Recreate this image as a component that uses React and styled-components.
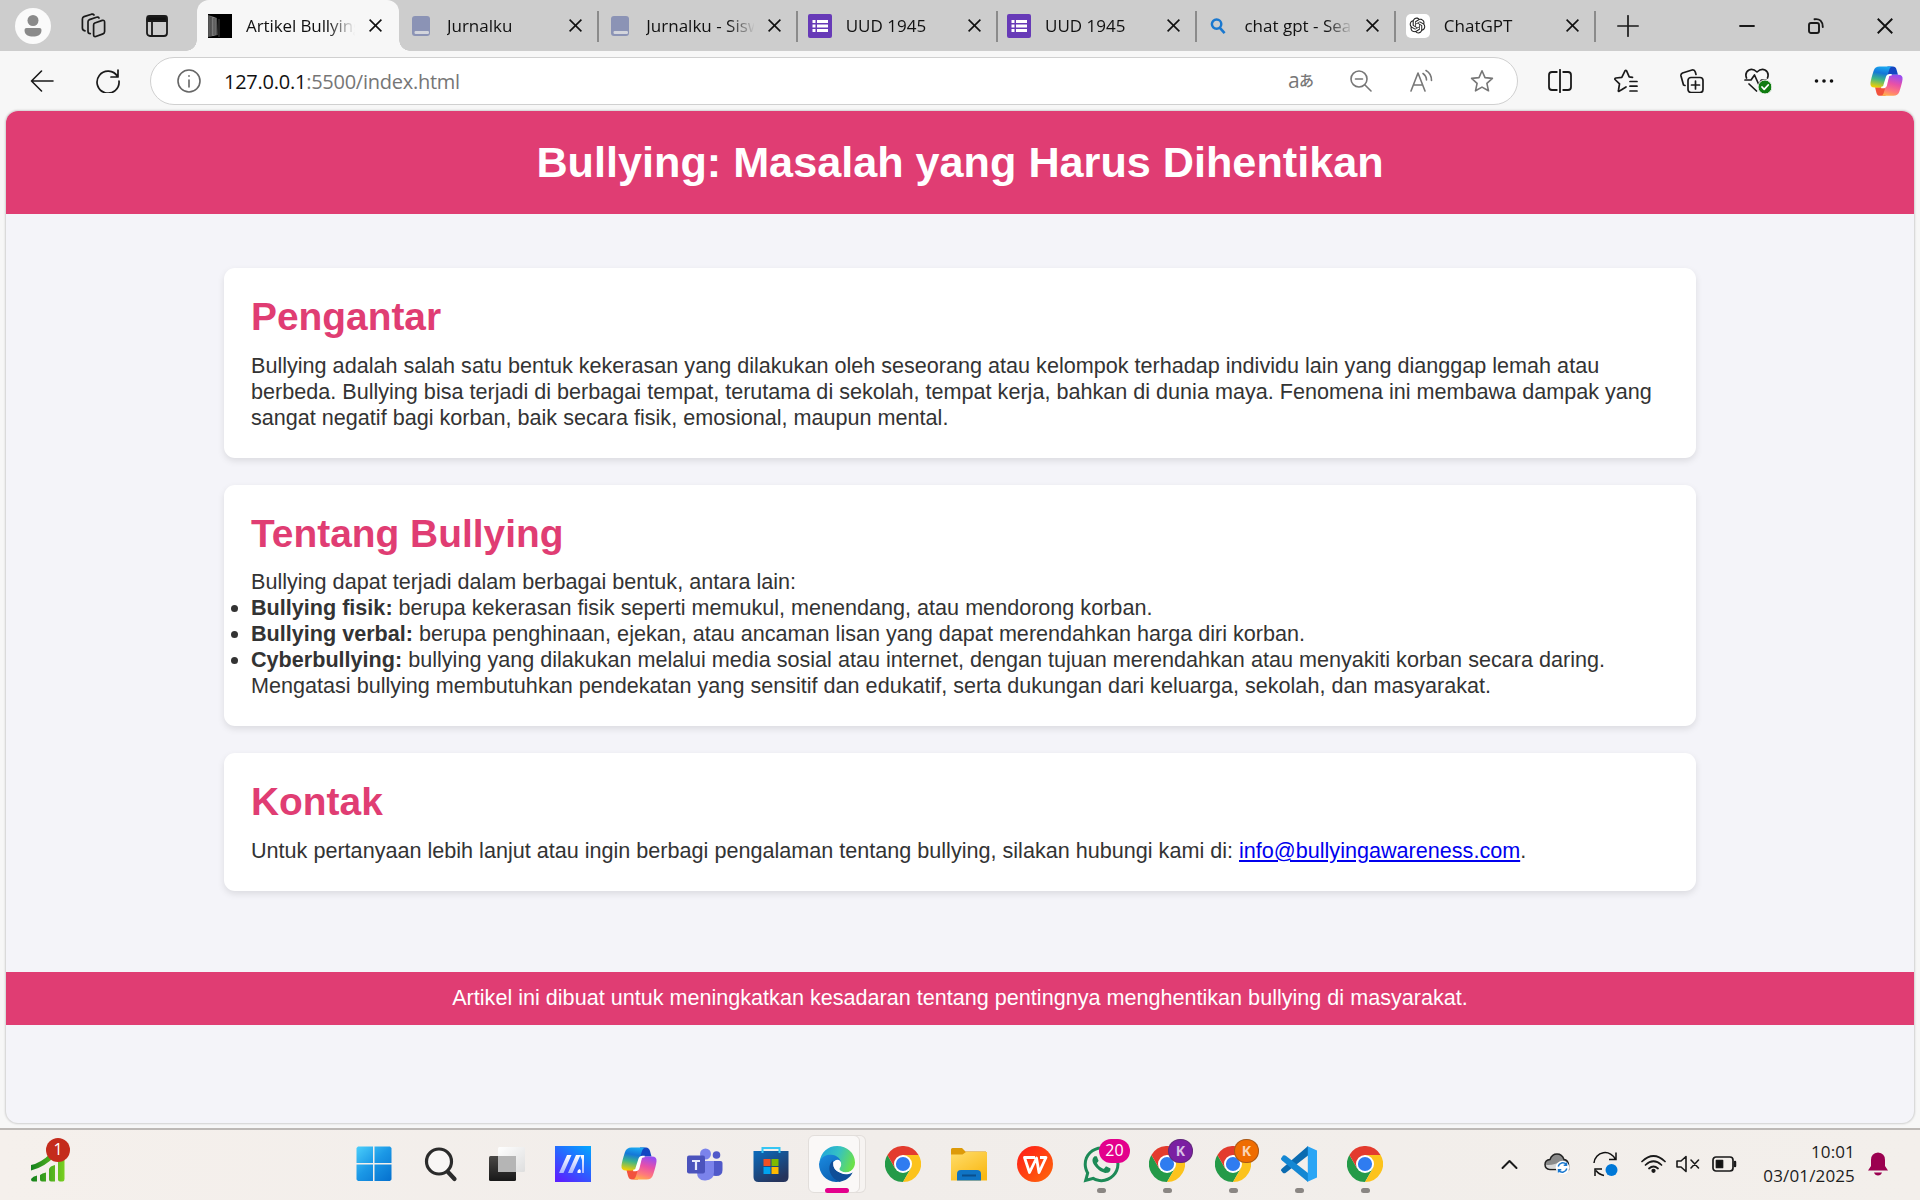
import React from "react";
import styled, { createGlobalStyle, css } from "styled-components";
import { RiOpenaiFill } from "react-icons/ri";
import { FaWhatsapp } from "react-icons/fa";

const GlobalStyle = createGlobalStyle`
  *, *::before, *::after { box-sizing: border-box; }
  html, body { margin: 0; padding: 0; overflow: hidden; }
`;

const uiFont = `"Open Sans", "Noto Sans", sans-serif`;
const pageFont = `"Liberation Sans", Arial, sans-serif`;
const pink = "#e03d73";

const Screen = styled.div`
  display: flex;
  flex-direction: column;
  width: 1920px;
  height: 1200px;
  overflow: hidden;
  background: #f7f7f7;
  font-family: ${uiFont};
  color: #111;
`;

/* ---------- tab strip ---------- */

const TabStrip = styled.div`
  display: flex;
  flex: none;
  height: 51px;
  background: #cdcdcd;
`;

const Cell = styled.div`
  display: flex;
  flex: none;
  align-items: center;
  justify-content: center;
  width: ${(p) => p.$w}px;
  height: 100%;
`;

const StripTools = styled.div`
  display: flex;
  width: 199px;
  padding-left: 2px;
`;

const Avatar = styled.div`
  display: flex;
  align-items: center;
  justify-content: center;
  width: 36px;
  height: 36px;
  border-radius: 50%;
  background: #fafafa;
`;

const TabBox = styled.div`
  position: relative;
  display: flex;
  flex: none;
  align-items: center;
  width: 199.4px;
  height: 51px;
  padding: 0 0 0 10.5px;
  ${(p) =>
    p.$active &&
    css`
      width: 202px;
      margin: 0 -0.6px 0 -2px;
      padding-left: 11px;
      background: #f7f7f7;
      border-radius: 12px 12px 0 0;
      &::before, &::after {
        content: "";
        position: absolute;
        bottom: 0;
        width: 11px;
        height: 11px;
      }
      &::before {
        left: -11px;
        background: radial-gradient(circle at 0 0, #cdcdcd 10.5px, #f7f7f7 11px);
      }
      &::after {
        right: -11px;
        background: radial-gradient(circle at 100% 0, #cdcdcd 10.5px, #f7f7f7 11px);
      }
    `}
  ${(p) =>
    p.$line &&
    css`
      &::after {
        content: "";
        position: absolute;
        right: -1px;
        top: 11px;
        width: 2px;
        height: 31px;
        background: #8b8b8b;
      }
    `}
`;

const Favicon = styled.div`
  display: flex;
  align-items: center;
  justify-content: center;
  width: 24px;
  height: 24px;
  margin-right: 14px;
`;

const TabLabel = styled.div`
  width: ${(p) => p.$w}px;
  height: 28px;
  overflow: hidden;
  white-space: nowrap;
  font-size: 17px;
  line-height: 28px;
  letter-spacing: ${(p) => p.$ls || 0}px;
  -webkit-mask-image: linear-gradient(90deg, #000 82px, transparent 109px);
  mask-image: linear-gradient(90deg, #000 82px, transparent 109px);
`;

const CloseCell = styled.div`
  display: flex;
  align-items: center;
  justify-content: center;
  width: 42px;
`;

const Spacer = styled.div`
  flex: 1;
`;

const Cross = ({ s = 13, w = 1.6 }) => (
  <svg width={s} height={s} viewBox="0 0 13 13" fill="none" stroke="#111" strokeWidth={w}>
    <path d="M.6.6 12.4 12.4M12.4.6.6 12.4" />
  </svg>
);

const DoorIcon = () => (
  <svg width="24" height="24">
    <defs>
      <linearGradient id="door" x1="0" x2="1" y1="0" y2="0">
        <stop offset="0" stopColor="#4a4a4a" />
        <stop offset=".6" stopColor="#8a8a8a" />
        <stop offset="1" stopColor="#333" />
      </linearGradient>
    </defs>
    <rect width="24" height="24" fill="#000" />
    <path d="M0 1 9 4 10 21 0 23z" fill="url(#door)" />
    <path d="M6 4v17M3 3v19" stroke="#333" strokeWidth=".8" />
    <path d="M11 5v18" stroke="#444" strokeWidth="1" />
  </svg>
);

const BookIcon = () => (
  <svg width="18" height="20" viewBox="0 0 18 20">
    <rect width="18" height="20" rx="3" fill="#8b93b5" />
    <rect x="2.500" y="15" width="14.500" height="3" rx="1.200" fill="#d3d5dc" />
  </svg>
);

const FormIcon = () => (
  <svg width="24" height="24">
    <rect width="24" height="24" rx="2" fill="#673ab7" />
    <g fill="#fff">
      <path d="M4.500 6h3v3h-3zM9 6h11v3H9zM4.500 10.500h3v3h-3zM9 10.500h11v3H9zM4.500 15h3v3h-3zM9 15h11v3H9z" />
    </g>
  </svg>
);

const SearchBlue = () => (
  <svg width="16" height="16" viewBox="0 0 17 17" fill="none" stroke="#1a78cf" strokeWidth="2.600">
    <circle cx="7" cy="6.500" r="5" />
    <path d="m10.500 10.500 5 5.500" strokeWidth="2.800" />
  </svg>
);

const GptBox = styled.div`
  display: flex;
  align-items: center;
  justify-content: center;
  width: 24px;
  height: 24px;
  border-radius: 5px;
  background: #fff;
  svg { width: 19px; height: 19px; color: #222; }
`;

const GptIcon = () => (
  <GptBox>
    <RiOpenaiFill />
  </GptBox>
);

const tabs = [
  { title: "Artikel Bullying", icon: <DoorIcon />, active: true, ls: -0.1 },
  { title: "Jurnalku", icon: <BookIcon />, line: true, ls: 0 },
  { title: "Jurnalku - Siswa", icon: <BookIcon />, line: true, ls: 0 },
  { title: "UUD 1945", icon: <FormIcon />, line: true, ls: 0 },
  { title: "UUD 1945", icon: <FormIcon />, line: true, ls: 0 },
  { title: "chat gpt - Search", icon: <SearchBlue />, line: true, ls: 0 },
  { title: "ChatGPT", icon: <GptIcon />, line: true, ls: 0 },
];

/* ---------- toolbar ---------- */

const Toolbar = styled.div`
  display: flex;
  flex: none;
  align-items: center;
  height: 60px;
  padding-left: 9px;
`;

const AddressBar = styled.div`
  display: flex;
  align-items: center;
  width: 1368px;
  height: 48px;
  margin: 0 8.500px 0 9px;
  padding: 0 4px 0 26px;
  border: 1.5px solid #d0d0d0;
  border-radius: 24px;
  background: #fff;
`;

const Url = styled.div`
  margin-left: 23px;
  font-size: 20px;
  line-height: 30px;
  padding-top: 1px;
  letter-spacing: ${(p) => p.$ls}px;
  white-space: nowrap;
  color: #767676;
  b { font-weight: 400; color: #111; }
`;

const Translate = styled.span`
  display: flex;
  align-items: center;
  font: 21px/24px ${uiFont};
  color: #777;
  padding-bottom: 3px;
  small { font: 500 15px/20px "Noto Sans CJK JP", sans-serif; margin-left: -0.5px; }
`;

const Ico = ({ w = 24, h = 24, sw = 1.6, c = "#1a1a1a", children }) => (
  <svg width={w} height={h} viewBox={`0 0 ${w} ${h}`} fill="none" stroke={c} strokeWidth={sw} strokeLinecap="round" strokeLinejoin="round">
    {children}
  </svg>
);

const Copilot = ({ size = 36, id }) => (
  <svg width={size} height={size * 0.92} viewBox="0 0 36 33">
    <defs>
      <linearGradient id={id + "a"} x1="0.5" y1="0" x2="0.3" y2="1">
        <stop offset="0" stopColor="#1aa7f0" />
        <stop offset=".3" stopColor="#1477d8" />
        <stop offset=".6" stopColor="#3db58a" />
        <stop offset="1" stopColor="#f5d000" />
      </linearGradient>
      <linearGradient id={id + "b"} x1=".6" y1="0" x2=".3" y2="1">
        <stop offset="0" stopColor="#9b4df0" />
        <stop offset=".4" stopColor="#e850a8" />
        <stop offset=".75" stopColor="#ff7a7a" />
        <stop offset="1" stopColor="#ffb04a" />
      </linearGradient>
    </defs>
    <path d="M19 0.5h6q3 0 4 3.5l1.5 5.5h-6q-4 0-5.5 4z" fill="#1346c2" />
    <path d="M17 32.5h-6q-3 0-4-3.5L5.500 23h6q4 0 5.500-4z" fill="#f2523d" />
    <path d="M10.500 0.500H25q-3 0-4 3.500l-5 16q-1 3.500-5 3.500H5q-5 0-4.500-5Q1 14 4 5 5.500.5 10.500.500z" fill={`url(#${id}a)`} />
    <path d="M25.500 32.500H11q3 0 4-3.500l5-16q1-3.500 5-3.500h6q5 0 4.500 5Q35 19 32 28q-1.500 4.500-6.500 4.500z" fill={`url(#${id}b)`} />
    <path d="M20.200 10.500q1-1 3.500-1h-2.200q-2.500 0-3.300 2.500l-3 9.500q-.8 2-3 2h2.200q2.500 0 3.300-2.500z" fill="#fff" stroke="#fff" strokeWidth="1.600" />
  </svg>
);

const starPath = "M12 1.800 15 8.600 22.400 9.400 16.900 14.400 18.500 21.800 12 18.100 5.500 21.800 7.100 14.400 1.600 9.400 9 8.600z";

/* ---------- web page ---------- */

const Page = styled.main`
  display: flex;
  flex-direction: column;
  flex: none;
  height: 1012px;
  margin: 0 6px;
  overflow: hidden;
  border-radius: 12px;
  background: #f4f4f9;
  box-shadow: 0 0 2px 1px rgba(0, 0, 0, 0.16);
  font: 21.6px/26px ${pageFont};
  color: #333;
`;

const Hero = styled.header`
  padding: 27px;
  background: ${pink};
  color: #fff;
  text-align: center;
  h1 { margin: 0; font-size: 43.2px; line-height: 49px; }
`;

const Content = styled.div`
  display: flex;
  flex-direction: column;
  gap: 27px;
  width: 1472px;
  margin: 54px auto 81px;
`;

const Card = styled.section`
  padding: 27px;
  border-radius: 11px;
  background: #fff;
  box-shadow: 0 3px 7px rgba(0, 0, 0, 0.1);
  height: ${(p) => p.$h}px;
  h2 { margin: 0 0 ${(p) => p.$gap || 14}px; font-size: 38.88px; line-height: 44px; color: ${pink}; }
  p, ul { margin: 0; padding: 0; }
  a { color: #0000ee; }
`;

const Footer = styled.footer`
  padding: 13px 0 14px;
  background: ${pink};
  color: #fff;
  text-align: center;
`;

/* ---------- taskbar ---------- */

const Taskbar = styled.div`
  display: flex;
  flex: none;
  align-items: center;
  height: 72px;
  margin-top: 5px;
  padding-bottom: 2px;
  border-top: 2px solid #bdb9b6;
  background: linear-gradient(90deg, #f5f0ec, #f1edea 45%, #f3efeb);
`;

const Widget = styled.div`
  position: relative;
  flex: none;
  width: 342px;
  height: 68px;
  padding: 17px 0 0 31px;
`;

const WidgetBadge = styled.div`
  position: absolute;
  left: 46px;
  top: 8px;
  width: 24px;
  height: 24px;
  border-radius: 50%;
  background: #c42b1c;
  color: #fff;
  text-align: center;
  font-size: 16px;
  line-height: 23px;
`;

const AppSlot = styled.div`
  position: relative;
  display: flex;
  flex: none;
  align-items: center;
  justify-content: center;
  width: 66px;
  height: 68px;
  padding-right: ${(p) => p.$nudge || 0}px;
  ${(p) =>
    p.$run &&
    css`
      &::after {
        content: "";
        position: absolute;
        left: calc(50% - 4.5px);
        top: 58px;
        width: 9px;
        height: 5px;
        border-radius: 3px;
        background: #8a8683;
      }
    `}
  ${(p) =>
    p.$current &&
    css`
      &::after {
        left: calc(50% - 12px);
        width: 24px;
        background: #e3008c;
      }
    `}
`;

const Highlight = styled.div`
  display: flex;
  align-items: center;
  justify-content: center;
  width: 52px;
  height: 58px;
  margin-right: 6px;
  padding-left: 6px;
  border-radius: 6px;
  background: #faf8f7;
  border: 1px solid #e2dedb;
  box-shadow: 6px 0 0 -1px #f6f3f1, 6px 0 0 0 #e2dedb;
`;

const Badge = styled.div`
  position: absolute;
  left: ${(p) => p.$x}px;
  top: 9px;
  width: ${(p) => p.$w}px;
  height: 24px;
  border-radius: 12px;
  background: ${(p) => p.$c};
  color: ${(p) => p.$fg || "#fff"};
  text-align: center;
  font-size: ${(p) => p.$fs || 16}px;
  font-weight: ${(p) => (p.$fs ? 700 : 400)};
  line-height: 23px;
  ${(p) => p.$fs && "box-shadow: inset 0 0 0 1px rgba(60,60,60,.4);"}
`;

const Chrome = () => (
  <svg width="36" height="36" viewBox="0 0 36 36">
    <path d="M2.400 9A18 18 0 0 0 18 36L25.800 22.500 18 18 10.200 22.500z" fill="#249a48" />
    <path d="M33.600 9A18 18 0 0 1 18 36L25.800 22.500 18 9z" fill="#fcc31c" />
    <path d="M2.400 9A18 18 0 0 1 33.600 9H18L10.200 22.500z" fill="#e33b2e" />
    <circle cx="18" cy="18" r="9" fill="#fff" />
    <circle cx="18" cy="18" r="7.100" fill="#2f7cf0" />
  </svg>
);

const WindowsLogo = () => (
  <svg width="36" height="36" viewBox="0 0 36 36">
    <defs>
      <linearGradient id="win" gradientUnits="userSpaceOnUse" x1="0" y1="0" x2="32" y2="36">
        <stop offset="0" stopColor="#4cd0fb" />
        <stop offset=".5" stopColor="#1b98e6" />
        <stop offset="1" stopColor="#0672cf" />
      </linearGradient>
    </defs>
    <path d="M2 .5h15v16.500H.5V2zM18.500.5H34L35.500 2v15h-17zM.5 18.500H17V35H2L.5 33.500zM18.500 18.500h17v15L34 35H18.500z" fill="url(#win)" />
  </svg>
);

const SearchDark = () => (
  <svg width="34" height="36" viewBox="0 0 34 36" fill="none" stroke="#2b2b2b" strokeLinecap="round">
    <circle cx="15" cy="15.500" r="12.500" strokeWidth="3.200" fill="#f8f6f5" />
    <path d="m24 26 6.500 7" strokeWidth="4.200" />
  </svg>
);

const TaskView = () => (
  <svg width="36" height="36" viewBox="0 0 36 36">
    <defs>
      <linearGradient id="tv" x1="0" x2="0" y1="0" y2="1">
        <stop offset="0" stopColor="#4a4846" />
        <stop offset="1" stopColor="#181818" />
      </linearGradient>
      <linearGradient id="tw" x1="0" x2="1" y1="0" y2="1">
        <stop offset="0" stopColor="#fff" />
        <stop offset="1" stopColor="#dedede" />
      </linearGradient>
    </defs>
    <rect x="0" y="10" width="27" height="25" rx="1.500" fill="url(#tv)" />
    <rect x="9" y="1" width="27" height="25" rx="1.500" fill="url(#tw)" />
    <rect x="9" y="10" width="18" height="16" fill="#b5b5b5" />
  </svg>
);

const Armoury = () => (
  <svg width="36" height="36" viewBox="0 0 36 36">
    <defs>
      <linearGradient id="arm" x1=".2" y1="1" x2=".9" y2="0">
        <stop offset="0" stopColor="#5a22ff" />
        <stop offset=".5" stopColor="#2a63ff" />
        <stop offset="1" stopColor="#05a3ff" />
      </linearGradient>
      <linearGradient id="armw" x1="0" y1="1" x2="0" y2="0">
        <stop offset="0" stopColor="#a9b6ff" />
        <stop offset="1" stopColor="#fff" />
      </linearGradient>
    </defs>
    <rect width="36" height="36" fill="url(#arm)" />
    <path d="M4 27 12 9h4.500L8.500 27zM13 27 21 9h4.500L17.500 27z" fill="url(#armw)" />
    <path d="M25 9h4v18h-2V14z" fill="url(#armw)" />
    <path d="M24.500 23q2 1 1 4h-3q-.5-3 2-4z" fill="#fff" />
  </svg>
);

const Teams = () => (
  <svg width="36" height="33" viewBox="0 0 36 33">
    <circle cx="18.500" cy="6" r="5.500" fill="#7b83eb" />
    <circle cx="29.500" cy="7" r="3.800" fill="#5059c9" />
    <path d="M26 13h7.500q2 0 2 2v7q0 6-6.500 6-3 0-4-1z" fill="#5059c9" />
    <path d="M10 13h17v11q0 8-8.500 8.500T10 24z" fill="#7b83eb" />
    <rect y="7.500" width="18" height="18" rx="2" fill="#4b53bc" />
    <path d="M5 12h8v2h-2.900v8H7.900v-8H5z" fill="#e8e9fb" />
  </svg>
);

const Store = () => (
  <svg width="36" height="36" viewBox="0 0 36 36">
    <defs>
      <linearGradient id="st" x1="0" x2=".6" y1="0" y2="1">
        <stop offset="0" stopColor="#0a6bbd" />
        <stop offset="1" stopColor="#26345c" />
      </linearGradient>
    </defs>
    <path d="M.5 5h35v26q0 5-5 5h-25q-5 0-5-5z" fill="url(#st)" />
    <path d="M9.500 7V2H26.500V7" fill="none" stroke="#35c5f3" strokeWidth="2" />
    <path d="M10.500 13h7v7h-7z" fill="#f25022" />
    <path d="M18.500 13h7v7h-7z" fill="#7fba00" />
    <path d="M10.500 21h7v7h-7z" fill="#00a4ef" />
    <path d="M18.500 21h7v7h-7z" fill="#ffb900" />
  </svg>
);

const Edge = () => (
  <svg width="36" height="36" viewBox="0 0 36 36">
    <defs>
      <linearGradient id="e1" x1="0" x2="1" y1=".2" y2=".5">
        <stop offset="0" stopColor="#1ea3dc" />
        <stop offset=".5" stopColor="#35c1c4" />
        <stop offset="1" stopColor="#6be14a" />
      </linearGradient>
      <linearGradient id="e2" x1="0" x2=".5" y1="0" y2="1">
        <stop offset="0" stopColor="#1b8be0" />
        <stop offset="1" stopColor="#0c62b5" />
      </linearGradient>
    </defs>
    <path d="M.5 16C2 6 9 0 18 0 28 0 36 7 36 16.500c0 6-4.500 10-9.500 10-4.500 0-7-1.800-6.500-3.300C22 21 22.500 19 22 17 20 12 6 8 .5 16z" fill="url(#e1)" />
    <path d="M0 18C1 11 7 8.500 12 8.800c6 .4 10 4 10 8.700 0-2.500-3-3.500-5-3-4 1-5 5-4.500 9 .7 6 5 10.500 9.500 11.800-2 .7-4 .7-5 .7C6.500 35.500 0 27 0 18z" fill="url(#e2)" />
    <path d="M14 14.500C8 19 9 31 20.500 35.700 27 35 31.500 31 33.300 27q.4-1.200-1-.6C24 30 14 25 14.200 18z" fill="#0f4e98" />
    <path d="M14.500 18.500c0-3 2-4.700 4-4.700s3.500 1.500 3.500 4c0 2-1.800 3.400-1.800 5 0 1.700 3 3.500 6.800 3.500-6 1.700-12.500-1.800-12.500-7.800z" fill="#fdfdfd" />
    <path d="M20.300 22.800c0 1.900 2.700 3.700 6.200 3.700 3 0 5.500-1 7.500-3l-1 3.300c-6 3-12 1-13.500-2z" fill="#fdfdfd" />
  </svg>
);

const Explorer = () => (
  <svg width="36" height="33" viewBox="0 0 36 33">
    <defs>
      <linearGradient id="ex" x1="0" x2=".7" y1="0" y2="1">
        <stop offset="0" stopColor="#ffdd6b" />
        <stop offset="1" stopColor="#f9b916" />
      </linearGradient>
    </defs>
    <path d="M0 1.500Q0 0 1.500 0H11l3.500 3.500H35V12H0z" fill="#dd9a08" />
    <path d="M0 6.500H11.500L15 4H36V32.500H0z" fill="url(#ex)" />
    <path d="M6 32.500V26q0-4 4-4H26q4 0 4 4v6.500z" fill="#0f74c4" />
    <path d="M11 27.500H25" stroke="#0a4f8c" strokeWidth="2" />
  </svg>
);

const Wps = () => (
  <svg width="36" height="36" viewBox="0 0 36 36">
    <defs>
      <linearGradient id="wp" x1="0" x2="1" y1="0" y2="1">
        <stop offset="0" stopColor="#ff1a1a" />
        <stop offset="1" stopColor="#ff6a0a" />
      </linearGradient>
    </defs>
    <circle cx="18" cy="18" r="18" fill="url(#wp)" />
    <path d="M18 11.500H7.500L12.500 26.500 19.500 12 22 26.500 29 11.500H23" fill="none" stroke="#fff" strokeWidth="2.800" strokeLinejoin="round" />
  </svg>
);

const VsCode = () => (
  <svg width="36" height="36" viewBox="0 0 36 36">
    <path d="M0 24.500 2 27q1.500.8 2.800-.2L27 9.500V0L1 22.500q-1.200 1-1 2z" fill="#0b6bb0" />
    <path d="M0 12.500 2 9.500q1.500-.8 2.800.2L27 27v9L1 14.500q-1.200-1-1-2z" fill="#1487d3" />
    <path d="M26 36 36 31.500V4.500L26 0q.8.6.8 2v32q0 1.300-.8 2z" fill="#2aa5f5" />
  </svg>
);

const WaWrap = styled.div`
  display: flex;
  svg { width: 41px; height: 41px; color: #1d8a57; }
`;

const apps = [
  { icon: <WindowsLogo />, nudge: 3 },
  { icon: <SearchDark /> },
  { icon: <TaskView /> },
  { icon: <Armoury /> },
  { icon: <Copilot id="tb" /> },
  { icon: <Teams /> },
  { icon: <Store /> },
  { icon: <Highlight><Edge /></Highlight>, run: true, current: true },
  { icon: <Chrome /> },
  { icon: <Explorer /> },
  { icon: <Wps /> },
  { icon: <WaWrap><FaWhatsapp /></WaWrap>, run: true, badge: { $x: 31, $w: 31, $c: "#e3008c", text: "20" } },
  { icon: <Chrome />, run: true, badge: { $x: 34, $w: 25, $c: "#7b1fa2", $fs: 14, $fg: "#d9bfe6", text: "K" } },
  { icon: <Chrome />, run: true, badge: { $x: 34, $w: 25, $c: "#ef6c00", $fs: 14, $fg: "#fbd5b5", text: "K" } },
  { icon: <VsCode />, run: true },
  { icon: <Chrome />, run: true },
];

const Clock = styled.div`
  width: 107px;
  flex: none;
  text-align: right;
  font-size: 17px;
  line-height: 24px;
  letter-spacing: 0.15px;
  color: #1c1c1c;
  white-space: nowrap;
`;

const BellCell = styled.div`
  display: flex;
  flex: none;
  align-items: center;
  width: 65px;
  padding-left: 13px;
`;

export default function App() {
  return (
    <Screen>
      <GlobalStyle />
      <TabStrip>
        <StripTools>
          <Cell $w={62}>
            <Avatar>
              <svg width="18" height="22" viewBox="0 0 18 22" fill="#8a8a8a">
                <circle cx="9" cy="5.500" r="5.500" />
                <path d="M2.500 13h13q2 0 2 2c0 5-4 6.500-8.500 6.500S.5 20 .5 15q0-2 2-2z" />
              </svg>
            </Avatar>
          </Cell>
          <Cell $w={58}>
            <Ico w={25} h={25} sw={1.700}>
              <path d="M13.800 10 21.300 7.400Q23.600 6.800 23.600 9.200V18.500Q23.600 20.300 22 20.900L14.800 23.500Q12.600 24 12.600 21.700V12Q12.600 10.500 13.800 10z" />
              <path d="M9.300 20.600Q7 20.500 7 18.500V8.800Q7 7.200 8.500 6.600L15.500 4.200Q17.500 3.700 18 5" />
              <path d="M4 17.800Q1.400 17.500 1.400 15V6Q1.400 4.200 3 3.600L10.500 1.200Q12.300.8 13 2" />
            </Ico>
          </Cell>
          <Cell $w={69}>
            <Ico w={22} h={22} sw={1.800}>
              <rect x="1" y="1" width="20" height="20" rx="3" />
              <path d="M1.500 1.500h19V6h-19z" fill="#111" />
              <path d="M6 7v14" />
            </Ico>
          </Cell>
        </StripTools>
        {tabs.map((t, i) => (
          <TabBox key={i} $active={t.active} $line={t.line}>
            <Favicon>{t.icon}</Favicon>
            <TabLabel $ls={t.ls} $w={t.active ? 108.5 : 107.5}>{t.title}</TabLabel>
            <CloseCell>
              <Cross />
            </CloseCell>
          </TabBox>
        ))}
        <Cell $w={66}>
          <Ico w={22} h={22} sw={1.700}><path d="M11 .8v20.400M.8 11h20.400" /></Ico>
        </Cell>
        <Spacer />
        <Cell $w={69}>
          <Ico w={16} h={16} sw={1.800}><path d="M1 8h14" /></Ico>
        </Cell>
        <Cell $w={69}>
          <Ico w={16} h={16} sw={1.900}>
            <rect x="1" y="5" width="10" height="10" rx="2" />
            <path d="M6.500 1.200Q14.500.2 14.800 9" />
          </Ico>
        </Cell>
        <Cell $w={70}><Cross s={16} w={1.500} /></Cell>
      </TabStrip>

      <Toolbar>
        <Cell $w={66}>
          <Ico w={24} h={22}><path d="M23 11H1.500M11.500 1 1.500 11l10 10" /></Ico>
        </Cell>
        <Cell $w={66}>
          <Ico sw={1.700}><path d="M21.500 7.500A11 11 0 1 0 23 12M22 1v7h-7" /></Ico>
        </Cell>
        <AddressBar>
          <Ico c="#666"><circle cx="12" cy="12" r="11" /><path d="M12 11v7M12 6.800v.4" /></Ico>
          <Url $ls={-0.25}><b>127.0.0.1</b>:5500/index.html</Url>
          <Spacer />
          <Cell $w={60}><Translate>a<small>あ</small></Translate></Cell>
          <Cell $w={60}>
            <Ico w={22} h={22} c="#777"><circle cx="9" cy="9" r="8" /><path d="M5.500 9h7M15 15l6 6" /></Ico>
          </Cell>
          <Cell $w={60}>
            <Ico c="#777">
              <path d="M2 22 9 4l7 18M4.500 16h9M14 4.500q3.500 2.500 3.500 6.500M17 1.500q5.500 3 5.500 10" />
            </Ico>
          </Cell>
          <Cell $w={62}><Ico c="#777"><path d={starPath} /></Ico></Cell>
        </AddressBar>
        <Cell $w={66}>
          <Ico sw={1.800}>
            <path d="M8.800 3H4Q1 3 1 6v12q0 3 3 3h4.800M15.200 3H20q3 0 3 3v12q0 3-3 3h-4.800M12 .8v22.400" />
          </Ico>
        </Cell>
        <Cell $w={66}>
          <Ico sw={1.700}>
            <path d="M8 20.500 5 22.300Q4 22.500 4.500 21L5.500 14.800 1 10.500Q.5 9.200 2 9L7.800 8.400 11 1.800Q11.800.8 12.600 1.800L15.200 7.800 18.500 8.400M16 12.500H23M16 17.200H23M16 22H23M8 20.500 12 18" />
          </Ico>
        </Cell>
        <Cell $w={66}>
          <Ico sw={1.700}>
            <rect x="8" y="8.500" width="15" height="15" rx="3" />
            <path d="M15.500 12v8M11.500 16h8M5 16.500 3.500 16 1 7Q.5 5 2.500 4L12 1q2.500-.5 3.300 2l.7 2.500" />
          </Ico>
        </Cell>
        <Cell $w={66}>
          <Ico w={28} h={26} sw={1.700}>
            <path d="M2.500 10Q.5 4.500 5 2q4-1.700 8 2 4-3.700 8-2 4.500 2.500 2.500 8M1 12h6l3.500-5 4.500 10 2.500-5H22M5 16l7.500 7" />
            <circle cx="21" cy="19" r="7" fill="#107c10" stroke="#f7f7f7" strokeWidth="1" />
            <path d="m18 19 2.200 2.300 4-4.300" stroke="#fff" strokeWidth="1.800" />
          </Ico>
        </Cell>
        <Cell $w={66}>
          <svg width="20" height="6" fill="#111"><circle cx="2.500" cy="3" r="1.800" /><circle cx="10" cy="3" r="1.800" /><circle cx="17.500" cy="3" r="1.800" /></svg>
        </Cell>
        <Cell $w={60}><Copilot id="bar" size={33} /></Cell>
      </Toolbar>

      <Page>
        <Hero><h1>Bullying: Masalah yang Harus Dihentikan</h1></Hero>
        <Content>
          <Card $h={190}>
            <h2>Pengantar</h2>
            <p>
              Bullying adalah salah satu bentuk kekerasan yang dilakukan oleh seseorang atau kelompok terhadap individu lain yang dianggap lemah atau berbeda. Bullying bisa terjadi di berbagai tempat, terutama di sekolah, tempat kerja, bahkan di dunia maya. Fenomena ini membawa dampak yang sangat negatif bagi korban, baik secara fisik, emosional, maupun mental.
            </p>
          </Card>
          <Card $h={241} $gap={13}>
            <h2>Tentang Bullying</h2>
            <p>Bullying dapat terjadi dalam berbagai bentuk, antara lain:</p>
            <ul>
              <li><b>Bullying fisik:</b> berupa kekerasan fisik seperti memukul, menendang, atau mendorong korban.</li>
              <li><b>Bullying verbal:</b> berupa penghinaan, ejekan, atau ancaman lisan yang dapat merendahkan harga diri korban.</li>
              <li><b>Cyberbullying:</b> bullying yang dilakukan melalui media sosial atau internet, dengan tujuan merendahkan atau menyakiti korban secara daring.</li>
            </ul>
            <p>Mengatasi bullying membutuhkan pendekatan yang sensitif dan edukatif, serta dukungan dari keluarga, sekolah, dan masyarakat.</p>
          </Card>
          <Card $h={138}>
            <h2>Kontak</h2>
            <p>
              Untuk pertanyaan lebih lanjut atau ingin berbagi pengalaman tentang bullying, silakan hubungi kami di: <a href="#kontak">info@bullyingawareness.com</a>.
            </p>
          </Card>
        </Content>
        <Footer>Artikel ini dibuat untuk meningkatkan kesadaran tentang pentingnya menghentikan bullying di masyarakat.</Footer>
      </Page>

      <Taskbar>
        <Widget>
          <svg width="35" height="35" viewBox="0 0 35 35">
            <defs>
              <linearGradient id="gr" gradientUnits="userSpaceOnUse" x1="0" x2="35" y1="0" y2="0">
                <stop offset="0" stopColor="#12801c" />
                <stop offset="1" stopColor="#7ed321" />
              </linearGradient>
            </defs>
            <g fill="url(#gr)">
              <path d="M0 32q2-3 6-3.500v6H2q-2 0-2-2.500zM9 28q2-2 6-2.500v9h-4q-2 0-2-2zM18 22q1-3 6-4v16.500h-4q-2 0-2-2zM27 14q1-3 6.500-4v22q0 2.500-2 2.500H29q-2 0-2-2z" />
              <path d="M0 18Q10 16 20 6l4 3Q14 20 0 23.500z" />
            </g>
          </svg>
          <WidgetBadge>1</WidgetBadge>
        </Widget>
        {apps.map(({ icon, run, current, nudge, badge }, i) => {
          const { text, ...look } = badge || {};
          return (
            <AppSlot key={i} $run={run} $current={current} $nudge={nudge}>
              {icon}
              {badge && <Badge {...look}>{text}</Badge>}
            </AppSlot>
          );
        })}
        <Spacer />
        <Cell $w={50}><Ico w={17} h={11} sw={2}><path d="m1.500 9 7-7 7 7" /></Ico></Cell>
        <Cell $w={46}>
          <svg width="26" height="22" viewBox="0 0 26 22">
            <path d="M6 16.500q-5-.5-5-5t5-5Q8 1 13 1t7 5.500q4 .5 4.500 5v5z" fill="#8a8a8a" stroke="#222" strokeWidth="1.500" />
            <path d="M6 15.800q-4-.5-4-4 7 1 16-3.800l4 8z" fill="#d8d8d8" />
            <circle cx="18.500" cy="14.500" r="6.800" fill="#fff" />
            <path d="M14.200 13.500a4.600 4.600 0 0 1 8-2m.3-2v2.800h-2.800M22.800 15.500a4.600 4.600 0 0 1-8 2m-.3 2v-2.800h2.800" fill="none" stroke="#1a78cf" strokeWidth="1.500" />
          </svg>
        </Cell>
        <Cell $w={50}>
          <svg width="25" height="26" viewBox="0 0 25 26">
            <path d="M1 12A11.200 11.200 0 0 1 22.500 8.500M23 1.500V8.500h-7M9 18H2v7M3 19.500Q6 23.500 11 24.500" fill="none" stroke="#111" strokeWidth="1.500" />
            <circle cx="18.500" cy="19" r="6" fill="#0078d7" />
          </svg>
        </Cell>
        <Cell $w={46}>
          <Ico w={25} h={18} sw={1.700}>
            <path d="M1 6.500q11.500-11 23 0M4.500 10q8-7.500 16 0M8 13.500q4.500-4 9 0" />
            <circle cx="12.500" cy="15.800" r="1.300" fill="#111" />
          </Ico>
        </Cell>
        <Cell $w={24}>
          <Ico w={24} h={18} sw={1.600}><path d="M1 6v6h4l5 4.500V1.500L5 6zM15 5l7.500 8M22.500 5 15 13" /></Ico>
        </Cell>
        <Cell $w={48}>
          <Ico w={25} h={16} sw={1.700}>
            <rect x="1" y="1" width="20" height="14" rx="3" />
            <path d="M4.500 4.500h6v7h-6z" fill="#111" />
            <path d="M23 6v4" strokeWidth="2.500" />
          </Ico>
        </Cell>
        <Clock>
          <div>10:01</div>
          <div>03/01/2025</div>
        </Clock>
        <BellCell>
          <svg width="20" height="24" viewBox="0 0 20 24" fill="#9b0050">
            <path d="M10 .5q7 .5 7 7.500v6l3 4.500H0L3 14V8q0-7 7-7.500zM6 20.500h8q-1 3-4 3t-4-3z" />
          </svg>
        </BellCell>
      </Taskbar>
    </Screen>
  );
}
